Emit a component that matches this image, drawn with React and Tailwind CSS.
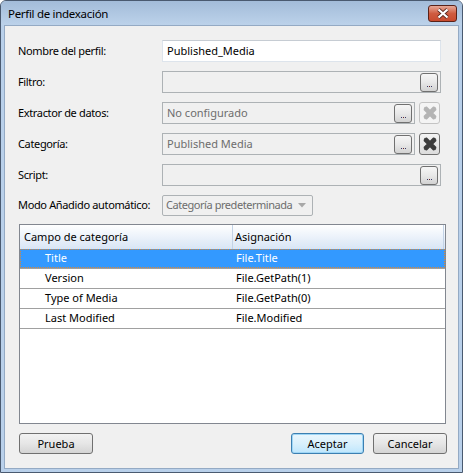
import React from "react";

const font = { fontFamily: '"Noto Sans", "Open Sans", sans-serif' };

function DotsButton() {
  return (
    <div className="w-[18px] h-[19px] rounded-[3px] border border-[#707070] bg-gradient-to-b from-[#f6f6f6] via-[#e8e8e8] to-[#d2d2d2] flex items-end justify-center pb-[4px] shrink-0">
      <div className="flex gap-[1px]">
        <span className="w-[1px] h-[1px] bg-[#3a3a6a]" />
        <span className="w-[1px] h-[1px] bg-[#6a2a2a]" />
        <span className="w-[1px] h-[1px] bg-[#3a3a6a]" />
      </div>
    </div>
  );
}

function XButton({ enabled }) {
  const c = enabled ? "#3c3c3c" : "#b4b4b4";
  return (
    <div
      className={
        "w-[21px] h-[22px] rounded-[3px] border flex items-center justify-center shrink-0 " +
        (enabled
          ? "border-[#707070] bg-gradient-to-b from-[#f4f4f4] to-[#dcdcdc]"
          : "border-[#c4c4c4] bg-[#f4f4f4]")
      }
    >
      <svg width="16" height="16" viewBox="0 0 16 16">
        <path d="M3 3 L13 13 M13 3 L3 13" stroke={c} strokeWidth="4.6" strokeLinecap="butt" fill="none" />
        <path d="M1.6 3.2 L3.2 1.6 L5 3.4 L3.4 5 Z M12.6 1.6 L14.4 3.2 L12.6 5 L11 3.4 Z M1.6 12.8 L3.4 11 L5 12.6 L3.2 14.4 Z M11 12.6 L12.6 11 L14.4 12.8 L12.8 14.4 Z" fill={c} />
      </svg>
    </div>
  );
}

function Label({ children }) {
  return <div className="w-[144px] shrink-0 text-[11px] text-black whitespace-nowrap tracking-[-0.35px]">{children}</div>;
}

function DisabledInput({ text, width, dots }) {
  return (
    <div
      className={"h-[22px] border border-[#adb2b5] bg-[#f0f0f0] flex items-center pl-[4px] pr-[2px] text-[11px] text-[#6d6d6d] whitespace-nowrap " + width}
    >
      <span className="flex-1 truncate">{text}</span>
      {dots && <DotsButton />}
    </div>
  );
}

export default function App() {
  const rows = [
    ["Title", "File.Title"],
    ["Version", "File.GetPath(1)"],
    ["Type of Media", "File.GetPath(0)"],
    ["Last Modified", "File.Modified"],
  ];
  return (
    <div style={font} className="w-[463px] h-[473px] flex flex-col border border-[#4a5a70] rounded-t-[6px] bg-[#b9d0ea] overflow-hidden">
      {/* Title bar */}
      <div className="h-[24px] shrink-0 flex items-center justify-between pl-[7px] pr-[5px] bg-gradient-to-b from-[#a3bcd9] to-[#bcd2ea]">
        <span className="text-[11.5px] text-black pt-[1px] whitespace-nowrap tracking-[-0.3px]">Perfil de indexación</span>
        <div className="w-[29px] h-[17px] rounded-[3px] border border-[#5a2218] bg-gradient-to-b from-[#e6a897] via-[#cf5c40] to-[#c84a2e] flex items-center justify-center mt-[1px]">
          <svg width="14" height="11" viewBox="0 0 14 11">
            <path d="M2.5 1.5 L11.5 9.5 M11.5 1.5 L2.5 9.5" stroke="#5a2a22" strokeWidth="3.8" />
            <path d="M2.5 1.5 L11.5 9.5 M11.5 1.5 L2.5 9.5" stroke="#ffffff" strokeWidth="2.2" />
          </svg>
        </div>
      </div>
      {/* Client */}
      <div className="flex-1 mx-[3px] mb-[3px] bg-[#f0f0f0] border border-[#94aac4] flex flex-col pl-[13px] pr-[11px] pt-[14px]">
        <div className="flex flex-col gap-[9px]">
          <div className="flex items-center h-[22px]">
            <Label>Nombre del perfil:</Label>
            <div className="w-[279px] h-[22px] border border-[#dde4ec] border-t-[#c6ccd3] bg-white flex items-center pl-[4px] text-[11px] text-black">
              Published_Media
            </div>
          </div>
          <div className="flex items-center h-[22px]">
            <Label>Filtro:</Label>
            <DisabledInput text="" width="w-[279px]" dots />
          </div>
          <div className="flex items-center h-[22px]">
            <Label>Extractor de datos:</Label>
            <DisabledInput text="No configurado" width="w-[253px]" dots />
            <div className="ml-[4px]"><XButton enabled={false} /></div>
          </div>
          <div className="flex items-center h-[22px]">
            <Label>Categoría:</Label>
            <DisabledInput text="Published Media" width="w-[253px]" dots />
            <div className="ml-[4px]"><XButton enabled /></div>
          </div>
          <div className="flex items-center h-[22px]">
            <Label>Script:</Label>
            <DisabledInput text="" width="w-[279px]" dots />
          </div>
          <div className="flex items-center h-[21px]">
            <Label>Modo Añadido automático:</Label>
            <div className="w-[151px] h-[21px] rounded-[2px] border border-[#adb2b5] bg-[#f0f0f0] flex items-center pl-[3px] pr-[6px] text-[11px] text-[#6d6d6d] whitespace-nowrap">
              <span className="flex-1 tracking-[-0.45px]">Categoría predeterminada</span>
              <svg width="8" height="5" viewBox="0 0 8 5"><path d="M0 0 H8 L4 4.5 Z" fill="#a8a8a8" /></svg>
            </div>
          </div>
        </div>
        {/* Table */}
        <div className="mt-[8px] ml-[1px] w-[427px] h-[200px] border border-[#828790] bg-white flex flex-col">
          <div className="h-[24px] shrink-0 flex bg-gradient-to-b from-[#ffffff] to-[#d8e5f5] text-[11px] text-black whitespace-nowrap">
            <div className="w-[213px] h-full flex items-center pl-[4px] border-r border-[#c4d3e6]">Campo de categoría</div>
            <div className="flex-1 h-full flex items-center pl-[2px]">Asignación</div>
            <div className="w-[1px] h-full bg-[#c4d3e6] mr-[1px]" />
          </div>
          {rows.map(([a, b], i) => (
            <div key={a} className="h-[20px] shrink-0 border-b border-[#a0a0a0] text-[11px] whitespace-nowrap">
              <div
                className={
                  "h-[19px] flex items-center " +
                  (i === 0 ? "bg-[#3399ff] text-white border border-dotted border-[#d7883a]" : "text-black border border-transparent")
                }
              >
                <div className="w-[213px] pl-[24px]">{a}</div>
                <div className="flex-1 pl-[2px]">{b}</div>
              </div>
            </div>
          ))}
        </div>
        {/* Buttons */}
        <div className="flex items-center mt-[9px] ml-[1px] mr-[0px]">
          <button className="w-[74px] h-[21px] rounded-[3px] border border-[#707070] bg-gradient-to-b from-[#f2f2f2] via-[#e6e6e6] to-[#d4d4d4] text-[11px] text-black leading-none">Prueba</button>
          <div className="flex-1" />
          <button className="w-[73px] h-[21px] rounded-[3px] border border-[#3c7fb1] bg-gradient-to-b from-[#eaf6fd] via-[#d9f0fc] to-[#bee6fd] text-[11px] text-black leading-none shadow-[inset_0_0_0_1px_#9fd6f6]">Aceptar</button>
          <button className="ml-[9px] w-[74px] h-[21px] rounded-[3px] border border-[#707070] bg-gradient-to-b from-[#f2f2f2] via-[#e6e6e6] to-[#d4d4d4] text-[11px] text-black leading-none">Cancelar</button>
        </div>
      </div>
    </div>
  );
}
